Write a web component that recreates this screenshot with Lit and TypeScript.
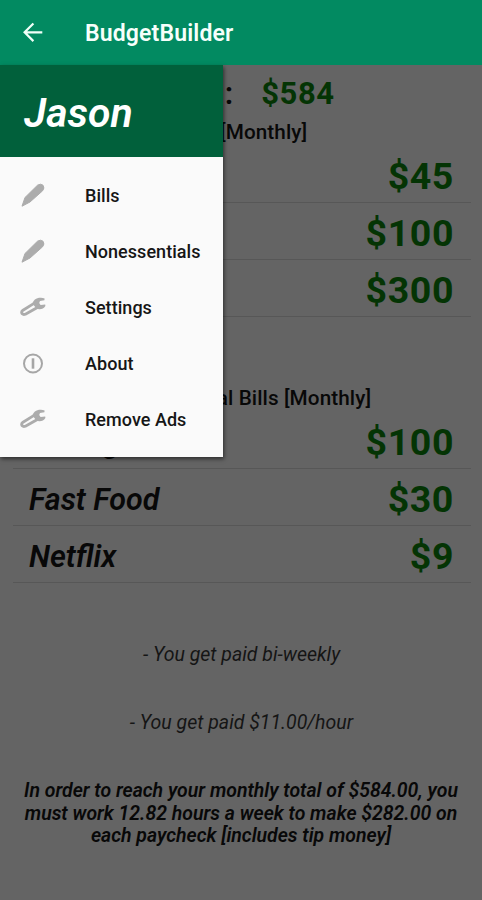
import { LitElement, html, css, svg } from "lit";
import { customElement, property } from "lit/decorators.js";

const pencil = svg`<path fill="#acacac" stroke="#acacac" stroke-width="1" stroke-linejoin="round" d="M2 23.2 L5 14.5 L17.5 2.2 Q20.5 .2 23 2.2 Q25 5 22.6 7.8 L10 19 Z"/>`;
const wrench = svg`<path fill="none" stroke="#acacac" stroke-width="2.8" stroke-linejoin="round" d="M13.6 8.6 L3 15.2 Q.8 17 2.2 18.8 Q3.4 20 5.4 19.2 L17.8 12.3"/><path fill="#acacac" d="M12.4 8.4 Q14 3.6 19 2.8 Q22.4 2.3 24.6 3.6 L24.4 5.2 L20 6 L19.2 8 L20.6 10 L25.2 9.6 L25.4 11 Q23 14.6 18.8 14.2 L15.6 12.4 Z"/>`;
const info = svg`<circle cx="13" cy="12.5" r="9" fill="none" stroke="#a6a6a6" stroke-width="2"/><path stroke="#a6a6a6" stroke-width="2.6" d="M13 7.3V17.7"/>`;

const menu = [
  { label: "Bills", icon: pencil },
  { label: "Nonessentials", icon: pencil },
  { label: "Settings", icon: wrench },
  { label: "About", icon: info },
  { label: "Remove Ads", icon: wrench },
];

type Bill = { name: string; amount: string };
const essential: Bill[] = [
  { name: "", amount: "$45" },
  { name: "", amount: "$100" },
  { name: "", amount: "$300" },
];
const extras: Bill[] = [
  { name: "Baking", amount: "$100" },
  { name: "Fast Food", amount: "$30" },
  { name: "Netflix", amount: "$9" },
];

@customElement("bill-list")
class BillList extends LitElement {
  @property({ attribute: false }) bills: Bill[] = [];
  static styles = css`
    :host { display: block; padding: 0 11px 0 13px; }
    .row {
      display: flex; justify-content: space-between; align-items: center;
      box-sizing: border-box; height: 57px; padding: 0 18px 0 16px;
      border-bottom: 1px solid #575757;
    }
    .name { font-size: 30.5px; font-weight: 600; font-style: italic; color: #080808; padding-top: 4px; }
    .amount { font-size: 37.5px; font-weight: 700; color: #043404; letter-spacing: .6px; margin-right: -1px; padding-top: 4px; }
  `;
  render() {
    return this.bills.map((b) => html`<div class="row"><span class="name">${b.name}</span><span class="amount">${b.amount}</span></div>`);
  }
}

@customElement("nav-drawer")
class NavDrawer extends LitElement {
  static styles = css`
    :host { display: block; width: 223px; height: 392px; background: #fafafa; box-shadow: 1px 2px 4px rgba(0,0,0,.55); }
    .user {
      height: 92px; box-sizing: border-box; padding: 3px 0 0 24px; background: #01603b; color: #fff;
      display: flex; align-items: center; font-size: 41px; font-weight: 600; font-style: italic;
    }
    .items { padding-top: 10px; }
    .item { display: flex; align-items: center; height: 56.2px; padding-left: 20px; font-size: 18px; font-weight: 500; color: #161616; letter-spacing: .04px; }
    svg { width: 26px; height: 25px; margin-right: 39px; flex: none; }
  `;
  render() {
    return html`<div class="user">Jason</div>
      <div class="items">${menu.map((m) => html`<div class="item"><svg viewBox="0 0 26 25">${m.icon}</svg><span>${m.label}</span></div>`)}</div>`;
  }
}

@customElement("app-root")
class AppRoot extends LitElement {
  static styles = css`
    :host { display: block; position: relative; height: 900px; overflow: hidden; background: #646464; font-family: Roboto, sans-serif; color: #080808; }
    .bar { height: 65px; background: #028a61; color: #f6fffb; display: flex; align-items: center; padding-left: 20px; box-sizing: border-box; }
    .bar svg { width: 26px; height: 26px; margin-right: 39px; }
    .title { font-size: 23px; font-weight: 600; letter-spacing: .15px; padding-top: 1px; }
    nav-drawer { position: absolute; left: 0; top: 65px; }
    .total { display: flex; justify-content: center; align-items: center; gap: 27px; height: 56px; padding-left: 3px; font-size: 31px; font-weight: 500; }
    .label { letter-spacing: 1px; font-weight: 600; }
    .sum { font-weight: 700; color: #043404; letter-spacing: .5px; }
    .heading { height: 25px; line-height: 23px; text-align: center; font-size: 20.7px; font-weight: 500; letter-spacing: .09px; }
    .second { margin-top: 70px; height: 25px; }
    .note { text-align: center; font-style: italic; font-size: 19.5px; line-height: 24px; color: #151515; padding-left: 1px; }
    .cycle { margin-top: 60px; }
    .rate { margin-top: 44px; }
    .advice { margin: 45px 14px 0; text-align: center; font-style: italic; font-weight: 600; font-size: 19.45px; line-height: 22.7px; white-space: nowrap; color: #080808; }
  `;
  render() {
    return html`
      <div class="bar">
        <svg viewBox="0 0 26 26" fill="none" stroke="#f0fff8" stroke-width="2.2"><path d="M22.3 12.3H4.6M13.4 3.5 4.6 12.3 13.4 21.1"/></svg>
        <span class="title">BudgetBuilder</span>
      </div>
      <div class="total"><span class="label">Total:</span><span class="sum">$584</span></div>
      <div class="heading">Bills [Monthly]</div>
      <bill-list .bills=${essential}></bill-list>
      <div class="heading second">Nonessential Bills [Monthly]</div>
      <bill-list .bills=${extras}></bill-list>
      <div class="note cycle">- You get paid bi-weekly</div>
      <div class="note rate">- You get paid $11.00/hour</div>
      <div class="advice">In order to reach your monthly total of $584.00, you<br>must work 12.82 hours a week to make $282.00 on<br>each paycheck [includes tip money]</div>
      <nav-drawer></nav-drawer>`;
  }
}
